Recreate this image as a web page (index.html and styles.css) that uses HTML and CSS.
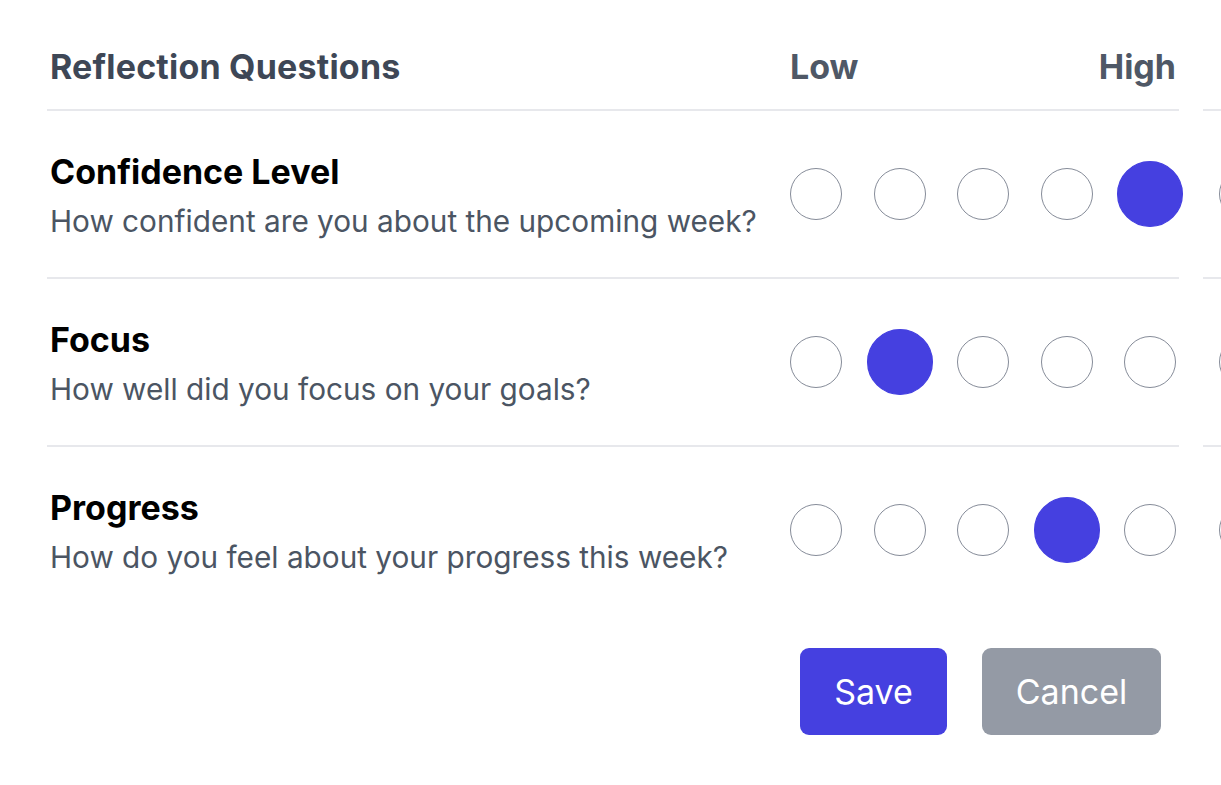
FILE: index.html
```html
<!DOCTYPE html>
<html>
<head>
<meta charset="utf-8">
<link rel="stylesheet" href="styles.css">
</head>
<body>
<div class="page">
  <div class="row head">
    <div class="main">
      <div class="q"><span class="head-title">Reflection Questions</span></div>
      <div class="scale-head"><span>Low</span><span>High</span></div>
    </div>
    <div class="extra"></div>
  </div>
  <div class="row">
    <div class="main">
      <div class="q">
        <div class="title">Confidence Level</div>
        <div class="sub">How confident are you about the upcoming week?</div>
      </div>
      <div class="dots">
        <span class="dot"></span><span class="dot"></span><span class="dot"></span><span class="dot"></span><span class="dot on"></span>
      </div>
    </div>
    <div class="extra"><span class="dot"></span></div>
  </div>
  <div class="row">
    <div class="main">
      <div class="q">
        <div class="title">Focus</div>
        <div class="sub">How well did you focus on your goals?</div>
      </div>
      <div class="dots">
        <span class="dot"></span><span class="dot on"></span><span class="dot"></span><span class="dot"></span><span class="dot"></span>
      </div>
    </div>
    <div class="extra"><span class="dot"></span></div>
  </div>
  <div class="row last">
    <div class="main">
      <div class="q">
        <div class="title">Progress</div>
        <div class="sub">How do you feel about your progress this week?</div>
      </div>
      <div class="dots">
        <span class="dot"></span><span class="dot"></span><span class="dot"></span><span class="dot on"></span><span class="dot"></span>
      </div>
    </div>
    <div class="extra"><span class="dot"></span></div>
  </div>
  <div class="actions">
    <button class="btn save">Save</button>
    <button class="btn cancel">Cancel</button>
  </div>
</div>
</body>
</html>
```
FILE: styles.css
```css
html, body {
  margin: 0;
  padding: 0;
  background: #ffffff;
  overflow: hidden;
}
body {
  font-family: Inter, "Noto Sans", sans-serif;
  width: 1221px;
  height: 785px;
}
.page {
  padding-left: 47px;
  width: 1400px;
}
.row {
  display: flex;
  gap: 24px;
}
.main {
  width: 1132px;
  display: flex;
  align-items: center;
  border-bottom: 2px solid #e7e8ec;
  height: 166px;
}
.row.last .main,
.row.last .extra {
  border-bottom: none;
}
.extra {
  width: 200px;
  border-bottom: 2px solid #e7e8ec;
  display: flex;
  align-items: center;
  padding-left: 16px;
}
.row.head .main {
  height: 111px;
  align-items: flex-start;
  padding-top: 47px;
  box-sizing: border-box;
}
.row.head .extra {
  height: 111px;
  box-sizing: border-box;
}
.q {
  width: 743px;
  flex: none;
  padding-left: 3px;
  box-sizing: border-box;
}
.head-title {
  font-size: 34px;
  font-weight: 700;
  color: #3e4756;
  line-height: 40px;
  letter-spacing: 0.2px;
}
.scale-head {
  width: 386px;
  display: flex;
  justify-content: space-between;
  font-size: 34px;
  font-weight: 700;
  color: #4f5866;
  line-height: 40px;
}
.title {
  font-size: 34px;
  font-weight: 700;
  color: #000;
  line-height: 54px;
}
.sub {
  font-size: 29.75px;
  color: #4b5563;
  line-height: 44px;
}
.dots {
  display: flex;
  gap: 31.5px;
  width: 386px;
}
.dot {
  width: 52px;
  height: 52px;
  box-sizing: border-box;
  border: 1.5px solid #868c99;
  border-radius: 50%;
  flex: none;
  background: #fff;
}
.dot.on {
  background: #4540e0;
  border-color: #4540e0;
  transform: scale(1.27);
}
.actions {
  width: 1132px;
  display: flex;
  justify-content: flex-end;
  gap: 35px;
  padding-right: 18px;
  box-sizing: border-box;
  margin-top: 35px;
}
.btn {
  font-family: Inter, "Noto Sans", sans-serif;
  font-size: 34px;
  color: #fff;
  border: none;
  border-radius: 9px;
  height: 87px;
  padding: 0;
  line-height: 87px;
  text-align: center;
}
.save {
  background: #4540e0;
  width: 147px;
}
.cancel {
  background: #949aa5;
  width: 179px;
}
```
